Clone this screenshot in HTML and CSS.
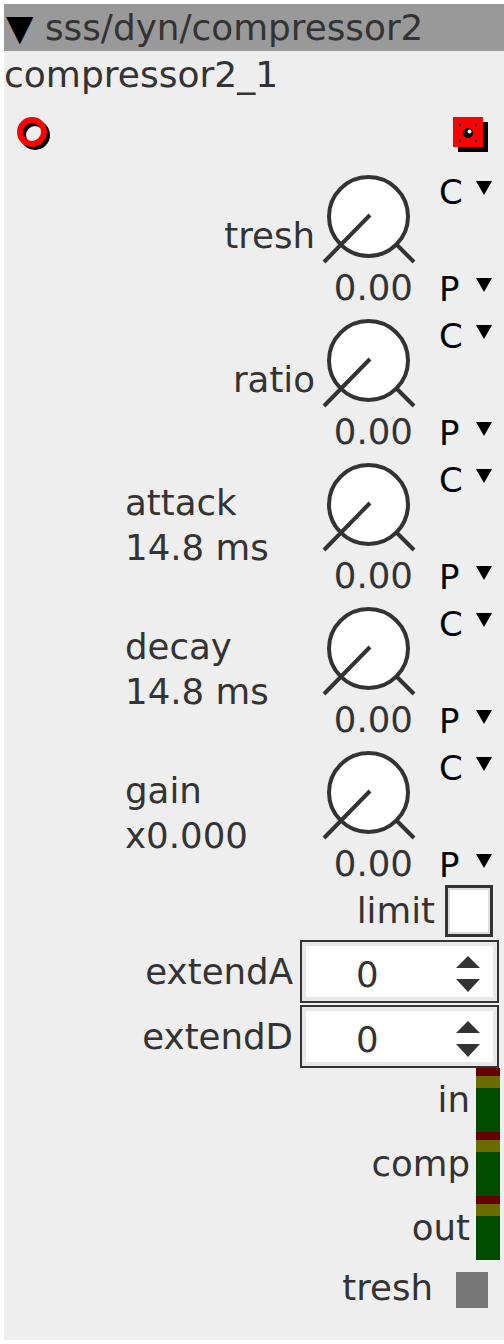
FILE: index.html
```html
<!DOCTYPE html>
<html>
<head>
<meta charset="utf-8">
<link rel="stylesheet" href="styles.css">
</head>
<body>
<div class="panel">
  <div class="header"><span class="htri">▼</span> sss/dyn/compressor2</div>
  <div class="name">compressor2_1</div>
  <div class="ports">
    <svg class="inlet" width="40" height="40" viewBox="0 0 40 40">
      <circle cx="21" cy="21" r="12" fill="none" stroke="#000" stroke-width="6"/>
      <circle cx="18" cy="18" r="12" fill="none" stroke="#ff0000" stroke-width="6"/>
    </svg>
    <svg class="outlet" width="40" height="40" viewBox="0 0 40 40">
      <rect x="8" y="8" width="30" height="30" fill="#000"/>
      <rect x="3" y="3" width="30" height="30" fill="#ff0000"/>
      <circle cx="18" cy="19" r="5" fill="#000"/>
      <circle cx="19.5" cy="17.5" r="2" fill="#fff"/>
      <rect x="9" y="10" width="2" height="2" fill="#000"/>
      <rect x="25" y="10" width="2" height="2" fill="#000"/>
      <rect x="9" y="26" width="2" height="2" fill="#000"/>
      <rect x="25" y="26" width="2" height="2" fill="#000"/>
    </svg>
  </div>
  <div class="knobs">
    <div class="krow">
      <div class="klabel single">tresh</div>
      <div class="knob">
        <svg width="100" height="100" viewBox="0 0 100 100"><circle cx="48.5" cy="48.5" r="39.5" fill="#fff" stroke="#333" stroke-width="4"/><line x1="50" y1="47" x2="4" y2="94" stroke="#333" stroke-width="4"/><line x1="77" y1="77" x2="94" y2="94" stroke="#333" stroke-width="4"/></svg>
        <div class="kval">0.00</div>
      </div>
      <div class="cp"><div class="cpl"><span class="cpt">C</span><span class="tri"></span></div><div class="cpl p"><span class="cpt">P</span><span class="tri"></span></div></div>
    </div>
    <div class="krow">
      <div class="klabel single">ratio</div>
      <div class="knob">
        <svg width="100" height="100" viewBox="0 0 100 100"><circle cx="48.5" cy="48.5" r="39.5" fill="#fff" stroke="#333" stroke-width="4"/><line x1="50" y1="47" x2="4" y2="94" stroke="#333" stroke-width="4"/><line x1="77" y1="77" x2="94" y2="94" stroke="#333" stroke-width="4"/></svg>
        <div class="kval">0.00</div>
      </div>
      <div class="cp"><div class="cpl"><span class="cpt">C</span><span class="tri"></span></div><div class="cpl p"><span class="cpt">P</span><span class="tri"></span></div></div>
    </div>
    <div class="krow">
      <div class="klabel double">attack<br>14.8 ms</div>
      <div class="knob">
        <svg width="100" height="100" viewBox="0 0 100 100"><circle cx="48.5" cy="48.5" r="39.5" fill="#fff" stroke="#333" stroke-width="4"/><line x1="50" y1="47" x2="4" y2="94" stroke="#333" stroke-width="4"/><line x1="77" y1="77" x2="94" y2="94" stroke="#333" stroke-width="4"/></svg>
        <div class="kval">0.00</div>
      </div>
      <div class="cp"><div class="cpl"><span class="cpt">C</span><span class="tri"></span></div><div class="cpl p"><span class="cpt">P</span><span class="tri"></span></div></div>
    </div>
    <div class="krow">
      <div class="klabel double">decay<br>14.8 ms</div>
      <div class="knob">
        <svg width="100" height="100" viewBox="0 0 100 100"><circle cx="48.5" cy="48.5" r="39.5" fill="#fff" stroke="#333" stroke-width="4"/><line x1="50" y1="47" x2="4" y2="94" stroke="#333" stroke-width="4"/><line x1="77" y1="77" x2="94" y2="94" stroke="#333" stroke-width="4"/></svg>
        <div class="kval">0.00</div>
      </div>
      <div class="cp"><div class="cpl"><span class="cpt">C</span><span class="tri"></span></div><div class="cpl p"><span class="cpt">P</span><span class="tri"></span></div></div>
    </div>
    <div class="krow">
      <div class="klabel double">gain<br>x0.000</div>
      <div class="knob">
        <svg width="100" height="100" viewBox="0 0 100 100"><circle cx="48.5" cy="48.5" r="39.5" fill="#fff" stroke="#333" stroke-width="4"/><line x1="50" y1="47" x2="4" y2="94" stroke="#333" stroke-width="4"/><line x1="77" y1="77" x2="94" y2="94" stroke="#333" stroke-width="4"/></svg>
        <div class="kval">0.00</div>
      </div>
      <div class="cp"><div class="cpl"><span class="cpt">C</span><span class="tri"></span></div><div class="cpl p"><span class="cpt">P</span><span class="tri"></span></div></div>
    </div>
  </div>
  <div class="limit-row"><span class="limit-lbl">limit</span><span class="check"></span></div>
  <div class="spin-row"><span class="spin-lbl">extendA</span><div class="spin"><span class="spin-val">0</span><svg class="arrows" width="24" height="36" viewBox="0 0 24 36"><polygon points="12,0 24,12 0,12" fill="#333"/><polygon points="0,23 24,23 12,36" fill="#333"/></svg></div></div>
  <div class="spin-row second"><span class="spin-lbl">extendD</span><div class="spin"><span class="spin-val">0</span><svg class="arrows" width="24" height="36" viewBox="0 0 24 36"><polygon points="12,0 24,12 0,12" fill="#333"/><polygon points="0,23 24,23 12,36" fill="#333"/></svg></div></div>
  <div class="meters">
    <div class="mrow"><span class="mlbl">in</span><div class="meter"></div></div>
    <div class="mrow"><span class="mlbl">comp</span><div class="meter"></div></div>
    <div class="mrow"><span class="mlbl">out</span><div class="meter"></div></div>
  </div>
  <div class="tresh-row"><span class="tresh-lbl">tresh</span><span class="swatch"></span></div>
</div>
</body>
</html>
```

FILE: styles.css
```css
html, body {
  margin: 0;
  padding: 0;
  background: #ffffff;
}
body {
  padding: 4px 0 0 4px;
}
.panel {
  width: 500px;
  height: 1336px;
  background: #eeeeee;
  font-family: "DejaVu Sans", sans-serif;
  font-size: 35.6px;
  color: #333333;
  display: flex;
  flex-direction: column;
}
.header {
  height: 47px;
  line-height: 47px;
  background: #999999;
  padding-left: 2px;
  white-space: nowrap;
  font-size: 35.8px;
}
.htri {
  color: #000;
}
.name {
  height: 48px;
  line-height: 48px;
  font-size: 36px;
}
.ports {
  height: 69px;
  display: flex;
  justify-content: space-between;
  align-items: flex-start;
}
.inlet {
  margin: 15px 0 0 10px;
}
.outlet {
  margin: 15px 14px 0 0;
}
.krow {
  display: grid;
  grid-template-columns: 316px 100px 84px;
  height: 144px;
}
.krow:last-child {
  height: 141px;
}
.klabel.single {
  text-align: right;
  padding: 48px 5px 0 0;
  line-height: 40px;
}
.klabel.double {
  padding: 24px 0 0 121px;
  line-height: 45px;
}
.knob svg {
  display: block;
}
.kval {
  line-height: 40px;
  text-align: right;
  padding-right: 7px;
}
.cp {
  display: flex;
  flex-direction: column;
  padding: 4px 0 0 19px;
  color: #000;
  font-size: 34px;
}
.cpl {
  display: flex;
  align-items: flex-start;
  height: 40px;
  line-height: 40px;
}
.cpl.p {
  margin-top: 57px;
}
.cpt {
  width: 37px;
}
.tri {
  width: 0;
  height: 0;
  border-left: 8px solid transparent;
  border-right: 8px solid transparent;
  border-top: 14px solid #000;
  margin-top: 9px;
}
.limit-row {
  height: 55px;
  display: flex;
  justify-content: flex-end;
  align-items: flex-start;
  padding-right: 11px;
}
.limit-lbl {
  line-height: 40px;
  margin: 6px 10px 0 0;
}
.check {
  width: 48px;
  height: 52px;
  box-sizing: border-box;
  border: 3px solid #333;
  background: #fff;
  box-shadow: inset 0 0 0 2px #dddddd;
}
.spin-row {
  display: flex;
  justify-content: flex-end;
  align-items: flex-start;
  padding-right: 5px;
  height: 63px;
}
.spin-row.second {
  margin-top: 2px;
}
.spin-lbl {
  line-height: 40px;
  margin: 12px 7px 0 0;
}
.spin {
  width: 199px;
  height: 63px;
  box-sizing: border-box;
  border: 2px solid #333;
  background: #fff;
  box-shadow: inset 0 0 0 4px #e8e8e8;
  display: flex;
  align-items: flex-start;
}
.spin-val {
  flex: 1;
  line-height: 40px;
  margin-top: 13px;
  padding-left: 54px;
}
.arrows {
  margin: 14px 17px 0 0;
}
.mrow {
  height: 64px;
  display: flex;
  justify-content: flex-end;
  padding-right: 4px;
}
.mlbl {
  line-height: 64px;
  margin-right: 6px;
}
.meter {
  width: 24px;
  height: 64px;
  background: linear-gradient(to bottom, #660000 0 8px, #6b6b00 8px 20px, #004d00 20px 64px);
}
.tresh-row {
  height: 80px;
  display: flex;
  justify-content: flex-end;
  align-items: flex-start;
  padding-right: 16px;
}
.tresh-lbl {
  line-height: 40px;
  margin: 8px 23px 0 0;
}
.swatch {
  width: 32px;
  height: 36px;
  background: #777777;
  margin-top: 12px;
}
```
